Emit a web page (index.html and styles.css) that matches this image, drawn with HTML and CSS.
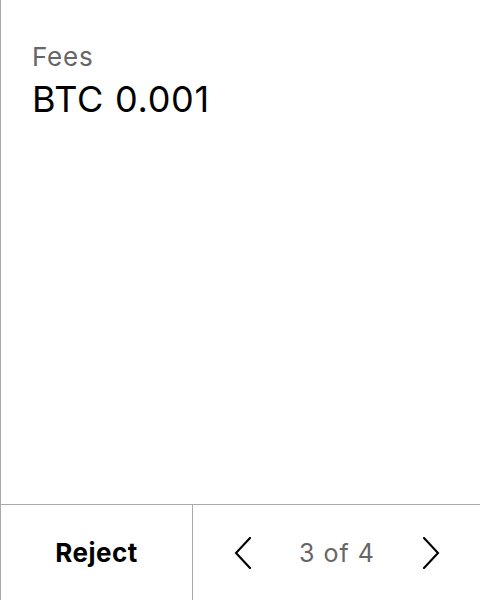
FILE: index.html
```html
<!DOCTYPE html>
<html>
<head>
<meta charset="utf-8">
<link rel="stylesheet" href="styles.css">
</head>
<body>
<div class="screen">
  <div class="content">
    <div class="label">Fees</div>
    <div class="value">BTC 0.001</div>
  </div>
  <div class="footer">
    <button class="reject">Reject</button>
    <div class="pager">
      <button class="nav" aria-label="Previous">
        <svg width="18" height="32" viewBox="0 0 18 32"><polyline points="16,1 2,16 16,31" fill="none" stroke="#000" stroke-width="2.1" stroke-linecap="round" stroke-linejoin="miter"/></svg>
      </button>
      <span class="count">3 of 4</span>
      <button class="nav" aria-label="Next">
        <svg width="18" height="32" viewBox="0 0 18 32"><polyline points="2,1 16,16 2,31" fill="none" stroke="#000" stroke-width="2.1" stroke-linecap="round" stroke-linejoin="miter"/></svg>
      </button>
    </div>
  </div>
</div>
</body>
</html>
```
FILE: styles.css
```css
html, body {
  margin: 0;
  padding: 0;
  background: #fff;
}
body {
  font-family: Inter, "Noto Sans", sans-serif;
  color: #000;
}
.screen {
  width: 480px;
  height: 600px;
  box-sizing: border-box;
  border-left: 1px solid #aaa;
  display: flex;
  flex-direction: column;
}
.content {
  flex: 1;
  padding: 42px 32px 0 31px;
}
.label {
  font-size: 26px;
  line-height: 30px;
  letter-spacing: 0.03em;
  color: #666;
}
.value {
  margin-top: 5px;
  font-size: 36px;
  line-height: 44px;
  letter-spacing: 0.02em;
  color: #000;
}
.footer {
  height: 96px;
  box-sizing: border-box;
  border-top: 1px solid #aaa;
  display: flex;
}
.reject {
  width: 192px;
  box-sizing: border-box;
  border: none;
  border-right: 1px solid #aaa;
  background: none;
  font-family: inherit;
  font-size: 26px;
  font-weight: 700;
  letter-spacing: 0.02em;
  color: #000;
  padding: 0;
}
.pager {
  flex: 1;
  display: flex;
  align-items: center;
  justify-content: space-between;
  padding: 0 40px 0 41px;
}
.nav {
  border: none;
  background: none;
  padding: 0;
  display: flex;
  align-items: center;
}
.count {
  font-size: 25px;
  letter-spacing: 0.04em;
  color: #666;
}
```
